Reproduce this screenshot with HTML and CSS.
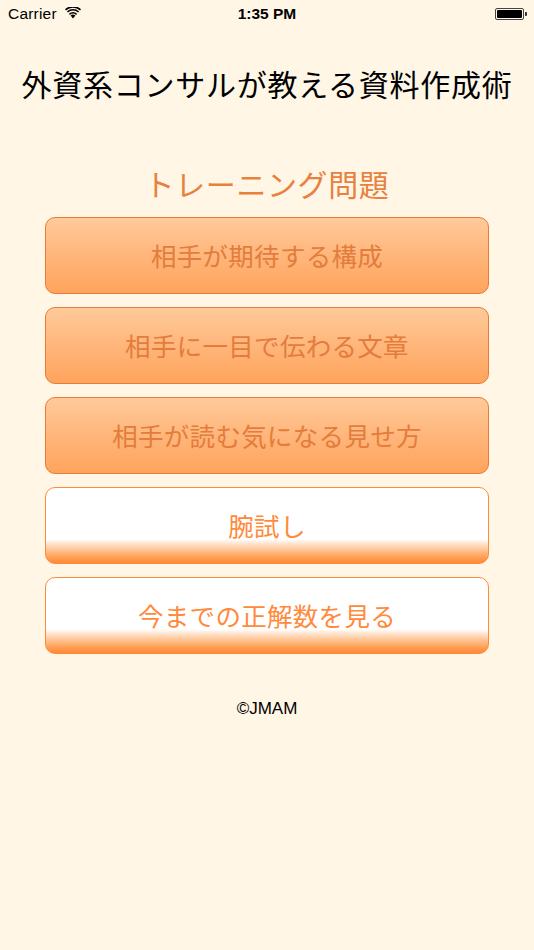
FILE: index.html
```html
<!DOCTYPE html>
<html lang="ja">
<head>
<meta charset="utf-8">
<title>外資系コンサルが教える資料作成術</title>
<link rel="stylesheet" href="styles.css">
</head>
<body>
<div class="statusbar">
  <div class="sb-left">
    <span class="carrier">Carrier</span>
    <svg class="wifi" width="16" height="12" viewBox="0 0 16 12">
      <path d="M8 11.5 L5.6 8.6 A3.6 3.6 0 0 1 10.4 8.6 Z" fill="#000"/>
      <path d="M3.9 6.7 A6.1 6.1 0 0 1 12.1 6.7 L11.1 7.9 A4.6 4.6 0 0 0 4.9 7.9 Z" fill="#000"/>
      <path d="M1.9 4.4 A9 9 0 0 1 14.1 4.4 L13.1 5.6 A7.5 7.5 0 0 0 2.9 5.6 Z" fill="#000"/>
      <path d="M0 2.2 A11.8 11.8 0 0 1 16 2.2 L15 3.4 A10.3 10.3 0 0 0 1 3.4 Z" fill="#000"/>
    </svg>
  </div>
  <div class="sb-time">1:35 PM</div>
  <div class="sb-right">
    <div class="battery"><div class="battery-fill"></div></div>
    <div class="battery-tip"></div>
  </div>
</div>

<h1 class="app-title">外資系コンサルが教える資料作成術</h1>
<h2 class="section-title">トレーニング問題</h2>

<div class="buttons">
  <div class="btn btn-orange">相手が期待する構成</div>
  <div class="btn btn-orange">相手に一目で伝わる文章</div>
  <div class="btn btn-orange">相手が読む気になる見せ方</div>
  <div class="btn btn-white">腕試し</div>
  <div class="btn btn-white">今までの正解数を見る</div>
</div>

<div class="copyright">©JMAM</div>
</body>
</html>
```
FILE: styles.css
```css
html, body {
  margin: 0;
  padding: 0;
}
body {
  background: #fff6e6;
  width: 534px;
  height: 950px;
  font-family: "Noto Sans CJK JP", "Noto Sans", sans-serif;
  color: #000;
  overflow: hidden;
}
.statusbar {
  height: 28px;
  display: flex;
  align-items: center;
  justify-content: space-between;
  padding: 0 7px 0 8px;
  position: relative;
  font-family: "Liberation Sans", Arial, sans-serif;
  font-size: 15.5px;
}
.sb-left {
  display: flex;
  align-items: center;
  gap: 8px;
}
.carrier {
  letter-spacing: 0.2px;
}
.wifi {
  display: block;
  margin-top: -2px;
}
.sb-time {
  position: absolute;
  left: 0;
  right: 0;
  text-align: center;
  font-weight: bold;
  pointer-events: none;
}
.sb-right {
  display: flex;
  align-items: center;
}
.battery {
  width: 29px;
  height: 12px;
  border: 1px solid #444;
  border-radius: 2px;
  padding: 1px;
  box-sizing: border-box;
  display: flex;
}
.battery-fill {
  flex: 1;
  background: #000;
  border-radius: 1px;
}
.battery-tip {
  width: 2px;
  height: 4px;
  background: #333;
  margin-left: 1px;
  border-radius: 0 1px 1px 0;
}
.app-title {
  margin: 35px 0 0;
  font-weight: normal;
  font-size: 30px;
  line-height: 40px;
  text-align: center;
  white-space: nowrap;
  letter-spacing: 0.75px;
}
.section-title {
  margin: 60px 0 0;
  font-weight: normal;
  font-size: 30px;
  line-height: 40px;
  text-align: center;
  color: #e8813e;
  letter-spacing: 0.6px;
}
.buttons {
  margin: 14px 45px 0;
  display: flex;
  flex-direction: column;
  gap: 13px;
}
.btn {
  height: 77px;
  box-sizing: border-box;
  border-radius: 10px;
  display: flex;
  align-items: center;
  justify-content: center;
  font-size: 25.5px;
  letter-spacing: 0.3px;
  padding-bottom: 2px;
}
.btn-orange {
  border: 1px solid #e77a36;
  background: linear-gradient(to bottom, #ffca9a 0%, #ffb478 55%, #ffa45c 100%);
  color: #e47c3c;
}
.btn-white {
  border: 1.5px solid #ff8a3c;
  background: linear-gradient(to bottom, #ffffff 0%, #ffffff 68%, #ffd4b0 78%, #ff9a4c 94%, #ff8a36 100%);
  color: #ff8a3c;
}
.copyright {
  margin-top: 45px;
  text-align: center;
  font-family: "Liberation Sans", Arial, sans-serif;
  font-size: 17px;
  line-height: 20px;
}
```
